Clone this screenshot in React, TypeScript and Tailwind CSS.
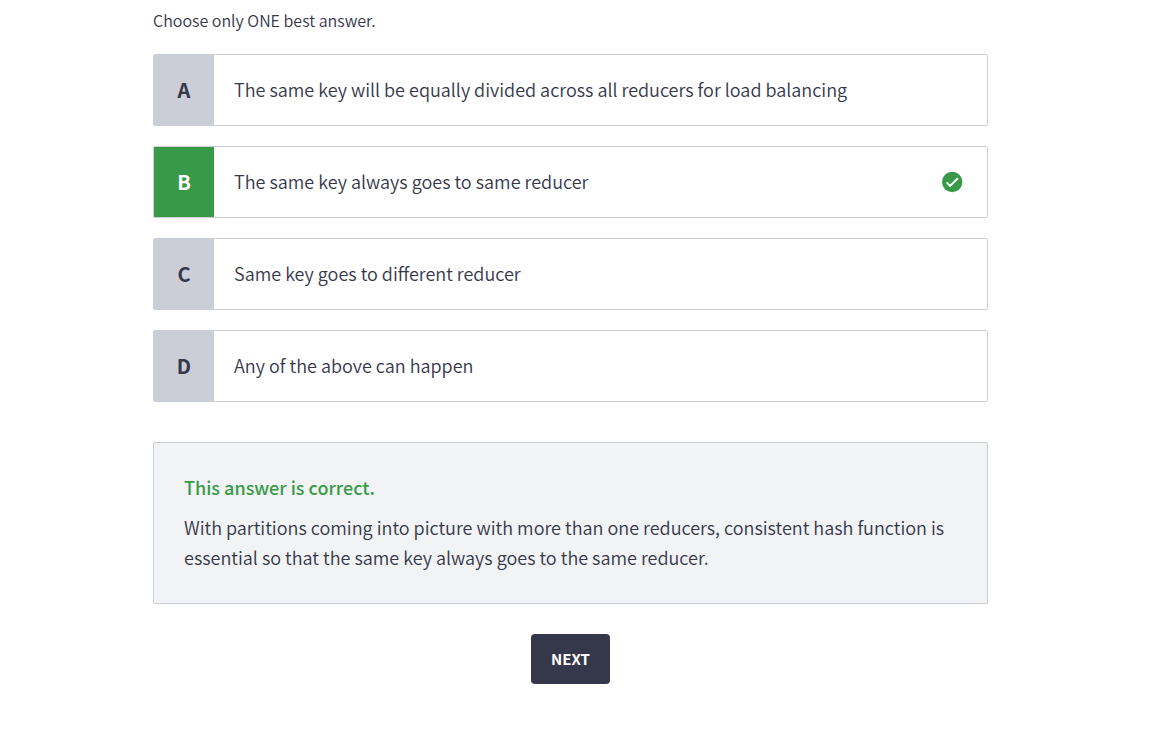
import React from 'react';

type Option = { letter: string; text: string; correct?: boolean };

const options: Option[] = [
  { letter: 'A', text: 'The same key will be equally divided across all reducers for load balancing' },
  { letter: 'B', text: 'The same key always goes to same reducer', correct: true },
  { letter: 'C', text: 'Same key goes to different reducer' },
  { letter: 'D', text: 'Any of the above can happen' },
];

function CheckBadge() {
  return (
    <svg viewBox="0 0 21 21" className="size-[21px]" role="img" aria-label="Correct">
      <circle cx="10.2" cy="10" r="10.2" fill="#389a48" />
      <path d="M4.6 10.4 8.1 13.9 15.9 6.3" fill="none" stroke="#fff" strokeWidth="2" />
    </svg>
  );
}

function OptionRow({ option }: { option: Option }) {
  const badge = option.correct ? 'bg-[#389a48] text-white' : 'bg-[#cbcdd7] text-[#35374a]';
  return (
    <button
      type="button"
      className="flex min-h-[72px] w-full items-stretch rounded-xs border border-[#cbcdd7] bg-white text-left"
    >
      <span className={`flex w-15 shrink-0 items-center justify-center text-xl font-bold ${badge}`}>
        {option.letter}
      </span>
      <span className="flex flex-1 items-center px-5 pb-0.5 text-lg">{option.text}</span>
      {option.correct && (
        <span className="flex shrink-0 items-center pr-6">
          <CheckBadge />
        </span>
      )}
    </button>
  );
}

export default function App() {
  return (
    <main className="min-h-screen bg-white pt-2 pr-[184px] pb-12 pl-[153px] font-['Noto_Sans_CJK_SC','Noto_Sans',sans-serif] font-[350] text-[#35374a]">
      <p className="text-base leading-6">Choose only ONE best answer.</p>
      <div className="mt-[22px] flex flex-col gap-5">
        {options.map((option) => (
          <OptionRow key={option.letter} option={option} />
        ))}
      </div>
      <section className="mt-10 rounded-xs border border-[#cbcdd7] bg-[#f1f3f5] px-[30px] pt-[29px] pb-[31px]">
        <h2 className="text-lg leading-[30px] font-medium text-[#389a48]">This answer is correct.</h2>
        <p className="mt-[10px] text-lg leading-[30px]">
          With partitions coming into picture with more than one reducers, consistent hash function is essential so
          that the same key always goes to the same reducer.
        </p>
      </section>
      <div className="mt-[30px] flex justify-center">
        <button type="button" className="h-[50px] rounded-sm bg-[#35374a] px-5 text-[15px] font-bold text-white">
          NEXT
        </button>
      </div>
    </main>
  );
}
